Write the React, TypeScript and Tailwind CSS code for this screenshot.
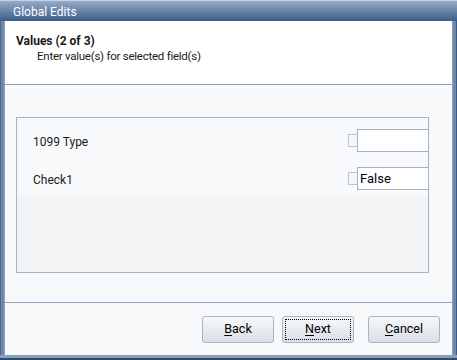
export default function App() {
  const font = { fontFamily: 'Roboto, "Noto Sans", sans-serif' };
  return (
    <div className="w-[457px] h-[360px] flex flex-col bg-[#3c5a85] text-[12px] text-[#1a1a1a]" style={font}>
      {/* Title bar */}
      <div className="h-[21px] shrink-0 flex items-center pl-[13px] pt-px text-white text-[12px] border-t border-[#c8d2e0] bg-gradient-to-b from-[#98abc6] to-[#3d5d8c]">
        Global Edits
      </div>

      <div className="flex flex-1 min-h-0">
        <div className="w-[5px] bg-[#6f87aa] border-l border-[#4a6690] border-r border-r-[#8ea1bd]" />

        <div className="flex-1 flex flex-col bg-[#f7f9fb]">
          {/* Header */}
          <div className="h-[64px] shrink-0 bg-white border-b border-[#8fa2bf] pt-[12px] pl-[11px]">
            <div className="font-bold text-[12px] leading-[16px]">Values (2 of 3)</div>
            <div className="pl-[21px] leading-[15px] text-[11.5px] tracking-[-0.25px]">
              Enter value(s) for selected field(s)
            </div>
          </div>

          {/* Body */}
          <div className="flex-1 pt-[32px] pl-[11px] pr-[23px] pb-[29px] flex">
            <div className="flex-1 flex flex-col border border-[#a3b3c8]">
              <div className="bg-[#f7f9fb] pt-[11px] pb-[5px] flex flex-col gap-[15px]">
                {[
                  { label: "1099 Type", value: "" },
                  { label: "Check1", value: "False" },
                ].map((r) => (
                  <div key={r.label} className="flex items-center h-[23px]">
                    <div className="flex-1 pl-[16px] pt-[2px]">{r.label}</div>
                    <div className="w-[9px] h-[13px] bg-[#f4f6f9] border border-r-0 border-[#b8c5d6]" />
                    <div className="w-[72px] h-[23px] -mr-px bg-white border border-[#a3b3c8] flex items-center pl-[2px] pt-px text-[13px] text-black">
                      {r.value}
                    </div>
                  </div>
                ))}
              </div>
              <div className="flex-1 bg-[#f3f4f6]" />
            </div>
          </div>

          {/* Footer */}
          <div className="h-[53px] shrink-0 border-t border-[#8fa2bf] flex justify-end items-start pt-[13px] pr-[12px]">
            <Btn className="mr-[8px]" k="B" rest="ack" />
            <Btn className="mr-[14px]" k="N" rest="ext" focus />
            <Btn k="C" rest="ancel" />
          </div>
        </div>

        <div className="w-[5px] bg-[#6f87aa] border-l border-[#8ea1bd] border-r border-r-[#3c5a85]" />
      </div>

      <div className="h-[5px] shrink-0 bg-[#8a9dba] border-b-2 border-[#2f4a70]" />
    </div>
  );
}

function Btn({ k, rest, focus, className = "" }: { k: string; rest: string; focus?: boolean; className?: string }) {
  return (
    <div
      className={`w-[72px] h-[27px] rounded-[3px] border border-[#a7b4c6] bg-gradient-to-b from-[#f7f8fa] to-[#d9dfe8] p-[2px] ${className}`}
    >
      <div
        className={`w-full h-full flex items-center justify-center text-[12.5px] text-black ${
          focus ? "border border-dotted border-black" : ""
        }`}
      >
        <span>
          <span className="underline underline-offset-2">{k}</span>
          {rest}
        </span>
      </div>
    </div>
  );
}
